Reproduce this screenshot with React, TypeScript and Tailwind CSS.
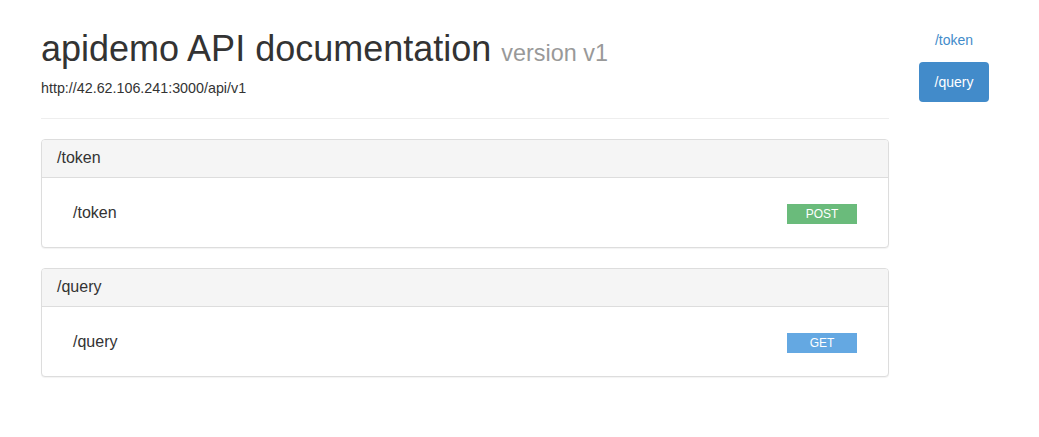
import React from "react";

function Panel({ title, method, color }: { title: string; method: string; color: string }) {
  return (
    <div className="rounded-[4px] border border-[#dddddd] bg-white shadow-[0_1px_1px_rgba(0,0,0,0.05)]">
      <div className="flex h-[38px] items-center rounded-t-[3px] border-b border-[#dddddd] bg-[#f5f5f5] px-[15px] text-[16px] leading-[1.1] text-[#333333]">
        {title}
      </div>
      <div className="flex h-[69px] items-center justify-between pl-[31px] pr-[31px] pt-[2px] text-[16px] text-[#333333]">
        <span>{title}</span>
        <span
          className={`mt-[2px] flex h-[20px] w-[70px] items-center justify-center text-[12px] text-white ${color}`}
        >
          {method}
        </span>
      </div>
    </div>
  );
}

export default function App() {
  return (
    <div
      className="flex min-h-[437px] bg-white pt-[20px] pl-[41px] text-[#333333]"
      style={{ fontFamily: '"Liberation Sans", Arial, Helvetica, sans-serif' }}
    >
      <div className="w-[848px]">
        <h1 className="mt-[9px] text-[36px] leading-[1.1] font-normal text-[#333333]">
          apidemo API documentation{" "}
          <span className="text-[23.4px] text-[#999999]">version v1</span>
        </h1>
        <p className="mt-[9px] text-[14.3px] leading-[20px] text-[#333333]">http://42.62.106.241:3000/api/v1</p>
        <div className="mt-[20px] h-px bg-[#eeeeee]" />
        <div className="mt-[20px] flex flex-col gap-[20px]">
          <Panel title="/token" method="POST" color="bg-[#6abb7b]" />
          <Panel title="/query" method="GET" color="bg-[#64a8e2]" />
        </div>
      </div>
      <div className="ml-[30px] flex w-[70px] flex-col items-stretch text-center text-[14px]">
        <a className="flex h-[40px] items-center justify-center text-[#428bca]">/token</a>
        <a className="mt-[2px] flex h-[40px] items-center justify-center rounded-[4px] bg-[#428bca] text-white">
          /query
        </a>
      </div>
    </div>
  );
}
